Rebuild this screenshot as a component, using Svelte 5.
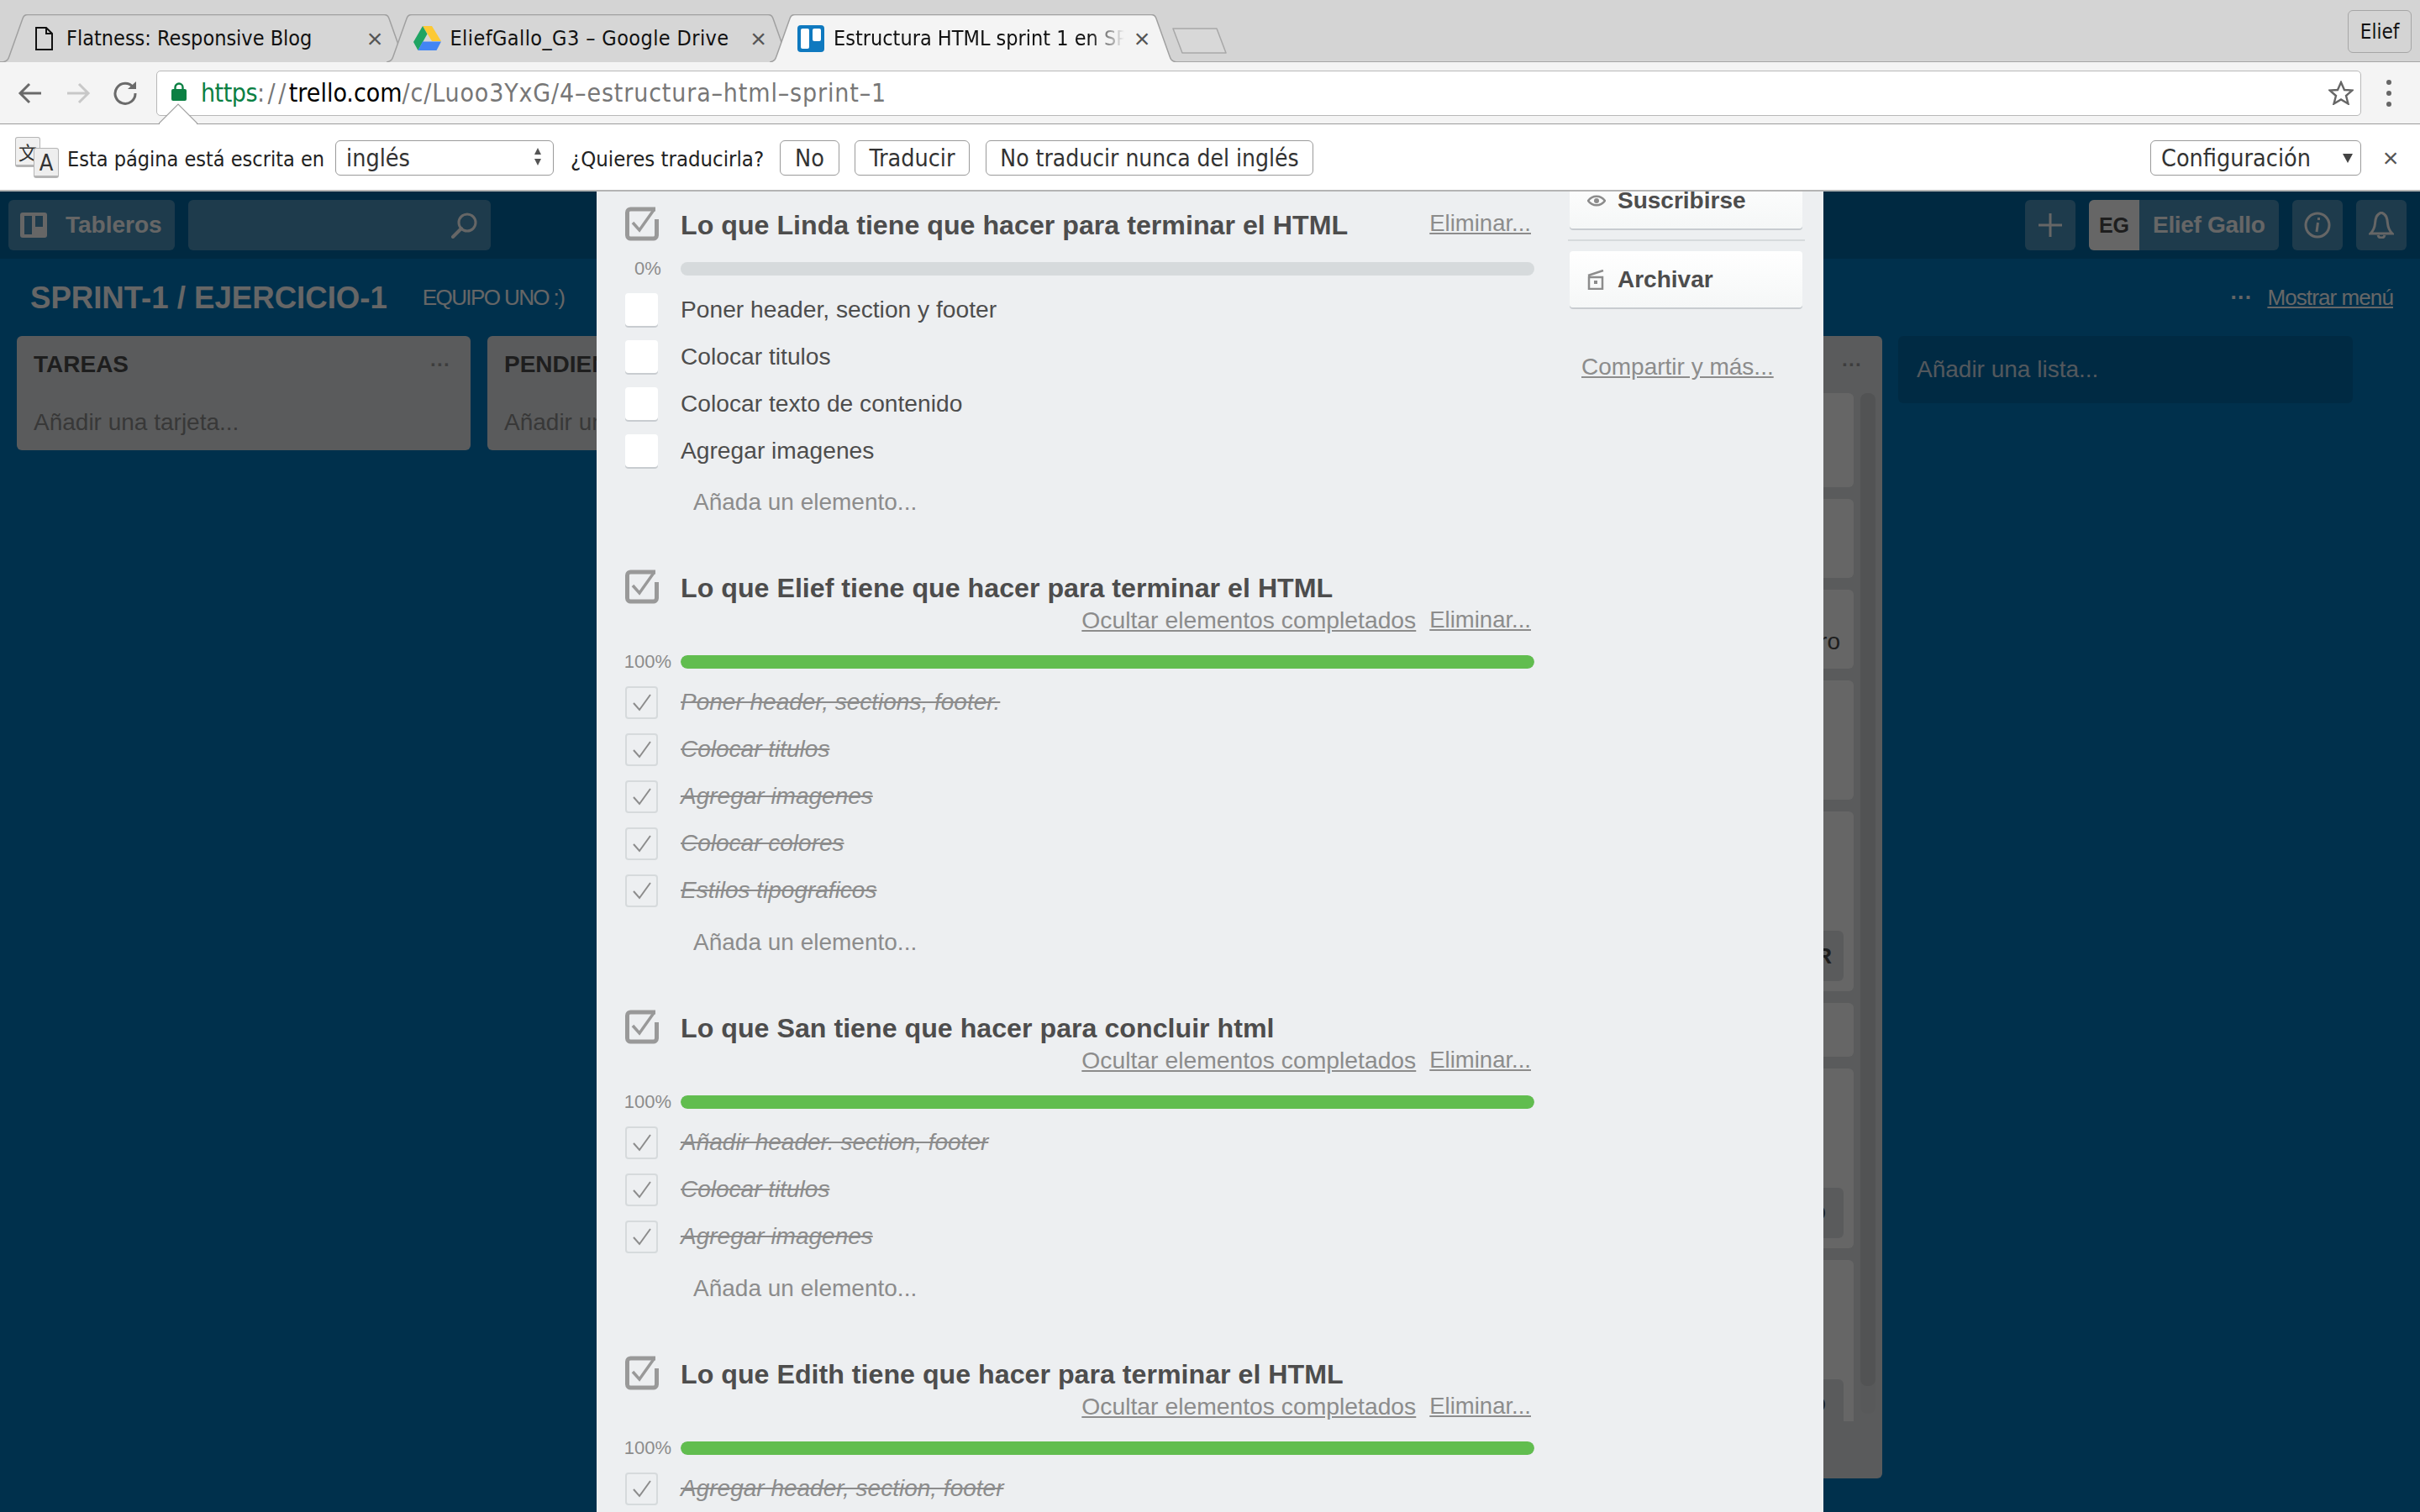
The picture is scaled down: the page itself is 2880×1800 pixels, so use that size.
<script>
  const tabs = [
    { title: 'Flatness: Responsive Blog', icon: 'doc' },
    { title: 'EliefGallo_G3 – Google Drive', icon: 'drive' },
    { title: 'Estructura HTML sprint 1 en SPRINT-1 / EJERCICIO-1 | Trello', icon: 'trello', active: true }
  ];
  const checklists = [
    { title: 'Lo que Linda tiene que hacer para terminar el HTML', pct: 0, done: false,
      items: ['Poner header, section y footer', 'Colocar titulos', 'Colocar texto de contenido', 'Agregar imagenes'] },
    { title: 'Lo que Elief tiene que hacer para terminar el HTML', pct: 100, done: true,
      items: ['Poner header, sections, footer.', 'Colocar titulos', 'Agregar imagenes', 'Colocar colores', 'Estilos tipograficos'] },
    { title: 'Lo que San tiene que hacer para concluir html', pct: 100, done: true,
      items: ['Añadir header. section, footer', 'Colocar titulos', 'Agregar imagenes'] },
    { title: 'Lo que Edith tiene que hacer para terminar el HTML', pct: 100, done: true,
      items: ['Agregar header, section, footer'] }
  ];
  const cards = [
    { h: 112 }, { h: 94 }, { h: 94, text: 'ro' }, { h: 142 },
    { h: 214, btn: 'ENTREGAR', cls: 'r' }, { h: 64 },
    { h: 214, btn: 'HECHO', cls: 'o' }, { h: 214, btn: 'HECHO', cls: 'o' }
  ];
</script>

<div class="screen">
  <div class="tabstrip">
    {#each tabs as t}
      <div class="tab" class:active={t.active} class:drive={t.icon === 'drive'}>
        <svg class="tabshape" width="484" height="57" viewBox="0 0 484 57">
          <path d="M0 57 C6 56 7 53 8 50 L24 5 C25 2 27 .5 30 .5 L454 .5 C457 .5 459 2 460 5 L476 50 C477 53 478 56 484 57" />
        </svg>
        <span class="favicon">
          {#if t.icon === 'doc'}
            <svg width="21" height="28" viewBox="0 0 21 28"><path d="M1 1 H13 L20 8 V27 H1 Z M13 1 V8 H20" fill="#fff" fill-opacity="0" stroke="#111" stroke-width="2"/></svg>
          {:else if t.icon === 'drive'}
            <svg width="33" height="29" viewBox="0 0 33 29"><path d="M11 0 H22 L33 18 H22 Z" fill="#fcc934"/><path d="M11 0 L16.5 9.5 L5.5 29 L0 19 Z" fill="#1fa463"/><path d="M11 18.5 H33 L27.5 29 H5.5 Z" fill="#4285f4"/></svg>
          {:else}
            <svg width="32" height="32" viewBox="0 0 32 32"><rect width="32" height="32" rx="4" fill="#0f79bf"/><rect x="4" y="4" width="10" height="24" rx="2" fill="#fff"/><rect x="18" y="4" width="10" height="15" rx="2" fill="#fff"/></svg>
          {/if}
        </span>
        <span class="tabtitle">{t.title}</span>
        <span class="tabclose">×</span>
      </div>
    {/each}
    <svg class="newtab" width="66" height="31" viewBox="0 0 66 31"><path d="M1 1 H53 L64 30 H12 Z" fill="#d8d8d8" stroke="#a8a8a8" stroke-width="1.5" stroke-linejoin="round"/></svg>
    <div class="profile">Elief</div>
  </div>

  <div class="toolbar">
    <svg class="navicon" width="30" height="30" viewBox="0 0 30 30"><path d="M28 15 H4 M14 4 L3 15 L14 26" fill="none" stroke="#6a6a6a" stroke-width="3"/></svg>
    <svg class="navicon" width="30" height="30" viewBox="0 0 30 30"><path d="M2 15 H26 M16 4 L27 15 L16 26" fill="none" stroke="#c8c8c8" stroke-width="3"/></svg>
    <svg class="navicon reload" width="30" height="30" viewBox="0 0 30 30"><path d="M24.5 8 A12 12 0 1 0 27 15" fill="none" stroke="#6a6a6a" stroke-width="3"/><path d="M18 10 H28 V1 Z" fill="#6a6a6a"/></svg>
    <div class="omnibox">
      <svg class="lock" width="18" height="22" viewBox="0 0 18 22"><path d="M4.5 9 V6 A4.5 4.5 0 0 1 13.5 6 V9" fill="none" stroke="#0b8043" stroke-width="2.4"/><rect y="8" width="18" height="14" rx="2" fill="#0b8043"/></svg>
      <span class="url"><span class="scheme">https</span><span class="sep1">://</span><span class="host">trello.com</span><span class="path">/c/Luoo3YxG/4–estructura–html–sprint–1</span></span>
      <svg class="star" width="30" height="29" viewBox="0 0 30 29"><path d="M15 2 L19 11 L28.5 11.5 L21 18 L23.5 27.5 L15 22.5 L6.5 27.5 L9 18 L1.5 11.5 L11 11 Z" fill="none" stroke="#666" stroke-width="2.4" stroke-linejoin="miter"/></svg>
    </div>
    <div class="dots"><i></i><i></i><i></i></div>
  </div>

  <div class="infobar">
    <svg class="bubble" width="46" height="25" viewBox="0 0 46 25"><path d="M0 24 L23 1 L46 24" fill="#fff" stroke="#a0a0a0" stroke-width="1.2"/><path d="M1 25 H45 V24 H1 Z" fill="#fff"/></svg>
    <div class="xlate"><span class="key back">文</span><span class="key front">A</span></div>
    <span class="lab">Esta página está escrita en</span>
    <div class="sel lang"><span>inglés</span><span class="updown"><b></b><b></b></span></div>
    <span class="lab ask">¿Quieres traducirla?</span>
    <button class="btn b1">No</button>
    <button class="btn b2">Traducir</button>
    <button class="btn b3">No traducir nunca del inglés</button>
    <div class="sel config"><span>Configuración</span><b class="tri"></b></div>
    <span class="infoclose">×</span>
  </div>

  <div class="page">
    <header class="thead">
      <div class="hbtn boards">
        <svg width="32" height="30" viewBox="0 0 32 30"><path fill-rule="evenodd" d="M3 0 H29 A3 3 0 0 1 32 3 V27 A3 3 0 0 1 29 30 H3 A3 3 0 0 1 0 27 V3 A3 3 0 0 1 3 0 Z M5 4 V26 H14 V4 Z M18 4 V17 H27 V4 Z" fill="#fff"/></svg>
        <span>Tableros</span>
      </div>
      <div class="hbtn search">
        <svg width="32" height="32" viewBox="0 0 32 32"><circle cx="19" cy="13" r="10" fill="none" stroke="#fff" stroke-width="3"/><path d="M12 20 L2 30" stroke="#fff" stroke-width="4" stroke-linecap="round"/></svg>
      </div>
      <div class="hbtn square plus"><svg width="28" height="28" viewBox="0 0 28 28"><path d="M14 0 V28 M0 14 H28" stroke="#fff" stroke-width="3"/></svg></div>
      <div class="hbtn user"><span class="avatar">EG</span><span class="uname">Elief Gallo</span></div>
      <div class="hbtn square"><svg width="32" height="32" viewBox="0 0 32 32"><circle cx="16" cy="16" r="14" fill="none" stroke="#fff" stroke-width="3"/><path d="M17.5 7 V10 M16.5 13 L15 24" stroke="#fff" stroke-width="3"/></svg></div>
      <div class="hbtn square"><svg width="30" height="32" viewBox="0 0 30 32"><path d="M15 1 C9 3 8 8 7.5 14 C7 20 5 23 2 26 H28 C25 23 23 20 22.5 14 C22 8 21 3 15 1 Z M11 28 C12 32 18 32 19 28" fill="none" stroke="#fff" stroke-width="3"/></svg></div>
    </header>

    <div class="boardbar">
      <h1>SPRINT-1 / EJERCICIO-1</h1>
      <span class="team">EQUIPO UNO :)</span>
      <span class="bdots">···</span>
      <span class="showmenu">Mostrar menú</span>
    </div>

    <div class="lists">
      <div class="list"><div class="lhead"><b>TAREAS</b><span>···</span></div><div class="addcard">Añadir una tarjeta...</div></div>
      <div class="list"><div class="lhead"><b>PENDIENTES</b><span>···</span></div><div class="addcard">Añadir una tarjeta...</div></div>
      <div class="list"><div class="lhead"><b>EN PROCESO</b><span>···</span></div><div class="addcard">Añadir una tarjeta...</div></div>
      <div class="list tall">
        <div class="lhead"><b>HECHO</b><span>···</span></div>
        <div class="lbody">
          <div class="cards">
            {#each cards as c}
              <div class="card" style="height:{c.h}px;">
                {#if c.text}<span class="cardtext">{c.text}</span>{/if}
                {#if c.btn}<span class="cardbtn {c.cls}">{c.btn}</span>{/if}
              </div>
            {/each}
          </div>
          <div class="track"><div class="thumb"></div></div>
        </div>
      </div>
      <div class="addlist">Añadir una lista...</div>
    </div>

    <div class="overlay">
      <div class="modal">
        <div class="main">
          {#each checklists as c}
            <section class="checklist">
              <div class="row headrow">
                <svg class="cicon" width="40" height="41" viewBox="0 0 40 41">
                  <path d="M36 3 H7 A4 4 0 0 0 2.500 7 V34 A4 4 0 0 0 7 38 H33 A4 4 0 0 0 37.500 34 V15" fill="none" stroke="#999" stroke-width="5"/>
                  <path d="M9 19 L17 28 L34 4" fill="none" stroke="#999" stroke-width="3.500"/>
                </svg>
                <div class="head">
                  <h3>{c.title}</h3>
                  <div class="actions">
                    {#if c.done}<a href="#top">Ocultar elementos completados</a>{/if}
                    <a class="del" href="#top">Eliminar...</a>
                  </div>
                </div>
              </div>
              <div class="row barrow">
                <span class="pct">{c.pct}%</span>
                <div class="bar"><div class="fill" style="width:{c.pct}%"></div></div>
              </div>
              {#each c.items as it}
                <div class="row item" class:done={c.done}>
                  <span class="box">
                    {#if c.done}
                      <svg width="24" height="24" viewBox="0 0 24 24"><path d="M2 13 L9 21 L22 3" fill="none" stroke="#8c8c8c" stroke-width="2"/></svg>
                    {/if}
                  </span>
                  <span class="itext">{it}</span>
                </div>
              {/each}
              <div class="add">Añada un elemento...</div>
            </section>
          {/each}
        </div>
        <aside class="side">
          <div class="sbtn sub">
            <svg width="22" height="16" viewBox="0 0 22 16"><path d="M1 8 C6 1 16 1 21 8 C16 15 6 15 1 8 Z" fill="none" stroke="#8c8c8c" stroke-width="2.500"/><circle cx="11" cy="8" r="3" fill="#8c8c8c"/></svg>
            <span>Suscribirse</span>
          </div>
          <div class="sep"></div>
          <div class="sbtn">
            <svg width="20" height="24" viewBox="0 0 20 24"><path d="M1 7 L19 1 M2 9 H18 V23 H2 Z" fill="none" stroke="#8c8c8c" stroke-width="2.500"/><rect x="8" y="13" width="4" height="4" fill="#8c8c8c"/></svg>
            <span>Archivar</span>
          </div>
          <a class="share" href="#top">Compartir y más...</a>
        </aside>
      </div>
    </div>
  </div>
</div>

<style>
  :global(body) { margin: 0; }
  .screen { width: 2880px; height: 1800px; overflow: hidden; display: flex; flex-direction: column; font-family: "Liberation Sans", Arial, sans-serif; }

  .tabstrip { flex: none; background: #d4d4d4; border-bottom: 1px solid #a6a6a6; display: flex; align-items: flex-start; padding: 17px 0 0 3px; box-sizing: content-box; height: 56px; position: relative; font-family: "DejaVu Sans Condensed", "DejaVu Sans", sans-serif; font-size: 25px; color: #111; }
  .tab { position: relative; width: 484px; height: 57px; flex: none; margin-right: -27.500px; display: flex; align-items: center; padding-left: 32px; box-sizing: border-box; }
  .tabshape { position: absolute; left: 0; top: 0; fill: #d6d6d6; stroke: #a0a0a0; stroke-width: 1.500; }
  .tab.active { z-index: 2; }
  .tab.active .tabshape { fill: #f4f4f4; }
  .favicon { position: relative; width: 34px; height: 32px; margin-right: 10px; display: flex; align-items: center; justify-content: center; flex: none; }
  .tabtitle { position: relative; width: 346px; white-space: nowrap; overflow: hidden; flex: none; }
  .tab.drive .tabtitle { letter-spacing: .4px; }
  .tab.active .tabtitle { mask-image: linear-gradient(to right, #000 88%, transparent 100%); -webkit-mask-image: linear-gradient(to right, #000 88%, transparent 100%); }
  .tabclose { position: relative; margin-left: 9px; width: 24px; text-align: center; font-size: 32px; line-height: 34px; color: #555; font-family: "Liberation Sans", sans-serif; }
  .newtab { position: relative; margin: 16px 0 0 22px; flex: none; z-index: 1; }
  .profile { margin: -5px 10px 0 auto; width: 76px; height: 51px; box-sizing: border-box; border: 1px solid #a6a6a6; border-radius: 6px; text-align: center; line-height: 50px; font-size: 24px; color: #111; }

  .toolbar { height: 73px; flex: none; background: #f4f4f4; border-bottom: 1px solid #9c9c9c; display: flex; align-items: center; box-sizing: content-box; font-family: "DejaVu Sans Condensed", "DejaVu Sans", sans-serif; }
  .navicon { margin-left: 20px; margin-right: 7px; flex: none; }
  .navicon:first-child { margin-left: 21px; }
  .navicon.reload { margin-left: 19px; margin-right: 8px; }
  .omnibox { margin-left: 14px; width: 2624px; height: 54px; box-sizing: border-box; background: #fff; border: 1px solid #b8b8b8; border-radius: 5px; display: flex; align-items: center; padding-left: 17px; flex: none; }
  .lock { flex: none; margin-bottom: 4px; }
  .url { margin-left: 17px; font-size: 30px; color: #777; white-space: nowrap; }
  .scheme { color: #0b8043; letter-spacing: -.5px; }
  .sep1 { letter-spacing: 3.500px; }
  .host { color: #000; }
  .path { letter-spacing: .85px; }
  .star { margin-left: auto; margin-right: 8px; }
  .dots { margin-left: 30px; display: flex; flex-direction: column; gap: 7px; }
  .dots i { width: 6px; height: 6px; border-radius: 50%; background: #666; }

  .infobar { height: 76px; padding-top: 2px; flex: none; background: #fff; border-bottom: 2px solid #b4b4b4; display: flex; align-items: center; position: relative; font-family: "DejaVu Sans Condensed", "DejaVu Sans", sans-serif; font-size: 25.500px; color: #222; }
  .bubble { position: absolute; left: 189px; top: -25px; }
  .xlate { position: relative; width: 52px; height: 48px; margin: 0 0 2px 18px; flex: none; }
  .key { position: absolute; width: 28px; height: 32px; border: 1px solid #b5b5b5; border-bottom-width: 3px; border-radius: 3px; display: flex; align-items: center; justify-content: center; font-weight: 400; color: #333; }
  .key.back { left: 0; top: 0; background: #f0f0f0; font-family: "Noto Sans CJK SC", sans-serif; font-size: 22px; }
  .key.front { left: 22px; top: 13px; background: #eee; font-size: 27px; }
  .lab { margin-left: 10px; width: 305px; white-space: nowrap; font-size: 25px; padding-top: 2px; }
  .lab.ask { margin-left: 20px; width: 229px; font-size: 25.500px; }
  .sel { height: 42px; box-sizing: border-box; border: 1.500px solid #9a9a9a; border-radius: 6px; display: flex; align-items: center; color: #333; position: relative; padding-left: 12px; font-size: 28.500px; }
  .lang { width: 260px; margin-left: 14px; }
  .updown { position: absolute; right: 14px; top: 8px; display: flex; flex-direction: column; gap: 5px; }
  .updown b { width: 0; height: 0; border-left: 4px solid transparent; border-right: 4px solid transparent; border-bottom: 8px solid #555; }
  .updown b:last-child { border-bottom: 0; border-top: 8px solid #555; }
  .config { width: 251px; margin-left: auto; }
  .tri { position: absolute; right: 9px; top: 15px; width: 0; height: 0; border-left: 6px solid transparent; border-right: 6px solid transparent; border-top: 11px solid #444; }
  .infoclose { width: 70px; text-align: center; font-family: "Liberation Sans", sans-serif; font-size: 32px; color: #555; }
  .btn { height: 42px; box-sizing: border-box; padding: 0; background: #fff; border: 1.500px solid #9a9a9a; border-radius: 6px; font: inherit; font-size: 28.500px; color: #333; text-align: center; white-space: nowrap; }
  .b1 { width: 71px; margin-left: 20px; }
  .b2 { width: 137px; margin-left: 18px; }
  .b3 { width: 390px; margin-left: 19px; font-size: 28px; }

  .page { flex: 1; position: relative; overflow: hidden; background: #0079bf; min-height: 0; }
  .thead { height: 80px; box-sizing: border-box; background: #0067a3; display: flex; gap: 16px; padding: 10px 16px 10px 10px; align-items: stretch; color: #fff; }
  .hbtn { height: 60px; background: rgba(255, 255, 255, .3); border-radius: 6px; display: flex; align-items: center; justify-content: center; flex: none; }
  .boards { width: 198px; justify-content: flex-start; padding-left: 14px; box-sizing: border-box; gap: 22px; font-weight: 700; font-size: 28px; }
  .search { width: 360px; justify-content: flex-end; padding-right: 15px; box-sizing: border-box; margin-right: auto; }
  .square { width: 60px; }
  .user { width: 226px; justify-content: flex-start; overflow: hidden; font-weight: 700; font-size: 28px; }
  .avatar { width: 60px; height: 60px; background: #fff; color: #4d4d4d; display: flex; align-items: center; justify-content: center; font-size: 25px; font-weight: 700; flex: none; }
  .uname { margin-left: 16px; white-space: nowrap; letter-spacing: -.3px; }

  .boardbar { height: 92px; display: flex; align-items: center; color: #fff; padding-left: 36px; padding-right: 32px; box-sizing: border-box; }
  h1 { margin: 2px 0 0; font-size: 36.600px; font-weight: 700; white-space: nowrap; }
  .team { margin-left: 42px; font-size: 26px; letter-spacing: -1.600px; white-space: nowrap; }
  .bdots { margin-left: auto; font-size: 26px; font-weight: 700; }
  .showmenu { margin-left: 18px; font-size: 26px; letter-spacing: -.9px; text-decoration: underline; }

  .lists { display: flex; gap: 20px; padding-left: 20px; align-items: flex-start; }
  .list { width: 540px; height: 136px; flex: none; background: #e2e4e6; border-radius: 6px; }
  .list.tall { height: 1360px; display: flex; flex-direction: column; }
  .lhead { height: 68px; display: flex; align-items: center; justify-content: space-between; padding: 0 24px 0 20px; color: #4d4d4d; font-size: 28px; flex: none; }
  .lhead span { color: #999; font-weight: 700; font-size: 24px; }
  .addcard { padding: 1px 20px 0; line-height: 68px; font-size: 28px; color: #8c8c8c; }
  .lbody { height: 1224px; display: flex; gap: 8px; padding-left: 16px; overflow: hidden; flex: none; }
  .cards { width: 490px; flex: none; display: flex; flex-direction: column; gap: 14px; }
  .card { flex: none; background: #fff; border-radius: 6px; box-sizing: border-box; display: flex; align-items: flex-end; justify-content: flex-end; position: relative; color: #4d4d4d; }
  .cardtext { font-size: 28px; padding: 0 16px 16px 0; }
  .cardbtn { height: 60px; width: 300px; margin: 0 12px 12px 0; box-sizing: border-box; background: #e2e4e6; border-radius: 6px; display: flex; align-items: center; justify-content: flex-end; font-weight: 700; font-size: 26px; }
  .cardbtn.r { padding-right: 14px; }
  .cardbtn.o { padding-right: 21px; }
  .track { width: 18px; height: 1215px; background: #dcdee0; border-radius: 8px; flex: none; }
  .thumb { height: 1182px; background: #cdcfd1; border-radius: 8px; }
  .addlist { width: 541px; height: 80px; margin-left: -1px; flex: none; background: rgba(0, 0, 0, .12); border-radius: 6px; padding-left: 22px; box-sizing: border-box; line-height: 80px; font-size: 28px; color: #d0dde8; }

  .overlay { position: absolute; inset: 0; background: rgba(0, 0, 0, .6); overflow: hidden; }
  .modal { position: relative; margin-left: 710px; width: 1460px; min-height: 1600px; background: #edeff1; display: flex; padding-left: 34px; box-sizing: border-box; color: #4d4d4d; }
  .main { width: 1082px; flex: none; padding-top: 20px; }
  .checklist { margin-bottom: 48px; }
  .row { display: grid; grid-template-columns: 66px 1fr; }
  .cicon { margin-top: -2px; }
  .head { display: flex; flex-wrap: wrap; justify-content: space-between; align-items: flex-start; padding-right: 4px; }
  h3 { margin: 0; font-size: 32.200px; line-height: 40px; font-weight: 700; white-space: nowrap; color: #4d4d4d; }
  .actions { margin-left: auto; display: flex; gap: 16px; line-height: 36px; font-size: 28.300px; white-space: nowrap; }
  .actions a, .share { color: #8c8c8c; text-decoration: underline; }
  .actions .del { font-size: 27.500px; }
  .barrow { margin-top: 24px; height: 16px; align-items: center; }
  .pct { width: 54px; text-align: center; font-size: 22px; line-height: 16px; color: #8c8c8c; white-space: nowrap; display: flex; justify-content: center; }
  .bar { height: 16px; background: #d6dadc; border-radius: 8px; overflow: hidden; }
  .fill { height: 100%; background: #61bd4f; border-radius: 8px; }
  .barrow + .item { margin-top: 12px; }
  .item { height: 56px; align-items: center; font-size: 28.200px; }
  .box { width: 39px; height: 39px; box-sizing: border-box; background: #fff; border-radius: 4px; box-shadow: 0 2px 0 #c8ccd0; display: flex; align-items: center; justify-content: center; }
  .item.done { font-size: 28px; }
  .item.done .box { background: transparent; border: 2px solid #d6dadc; box-shadow: none; }
  .item.done .itext { font-style: italic; color: #8c8c8c; text-decoration: line-through; }
  .add { margin-left: 81px; height: 68px; line-height: 68px; font-size: 28px; color: #8c8c8c; }

  .side { width: 280px; margin-left: 42px; flex: none; margin-top: -23px; display: flex; flex-direction: column; }
  .sbtn { width: 277px; height: 67px; flex: none; box-sizing: border-box; background: linear-gradient(#fff, #f5f7f7); border-radius: 4px; box-shadow: 0 2px 0 #c8ccd0; position: relative; display: flex; align-items: center; padding-left: 57px; font-size: 28px; font-weight: 700; color: #4d4d4d; }
  .sbtn svg { position: absolute; left: 21px; top: 50%; transform: translateY(-50%); }
  .sep { height: 2px; margin: 13px 0 12px -2px; background: #d6dadc; }
  .share { margin: 55px 0 0 14px; font-size: 28px; white-space: nowrap; }
</style>
